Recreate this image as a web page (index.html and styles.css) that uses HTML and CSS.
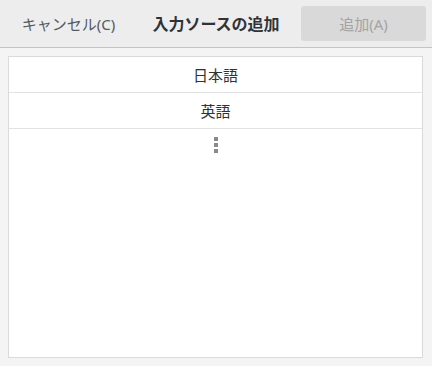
FILE: index.html
```html
<!DOCTYPE html>
<html lang="ja">
<head>
<meta charset="utf-8">
<link rel="stylesheet" href="styles.css">
</head>
<body>
<div class="dialog">
  <header class="header">
    <button class="btn btn-cancel">キャンセル(C)</button>
    <div class="title">入力ソースの追加</div>
    <button class="btn btn-add" disabled>追加(A)</button>
  </header>
  <main class="content">
    <div class="list">
      <div class="row">日本語</div>
      <div class="row">英語</div>
      <div class="row row-more">
        <span class="dots"><i></i><i></i><i></i></span>
      </div>
    </div>
  </main>
</div>
</body>
</html>
```
FILE: styles.css
```css
html, body {
  margin: 0;
  padding: 0;
  width: 432px;
  height: 366px;
  overflow: hidden;
}
body {
  font-family: "Noto Sans", "Noto Sans CJK JP", sans-serif;
  background: #f4f4f4;
  color: #2e3436;
}
.dialog {
  display: flex;
  flex-direction: column;
  height: 366px;
}
.header {
  display: flex;
  align-items: center;
  padding: 0 6px;
  box-sizing: border-box;
  background: #ededed;
  border-bottom: 1px solid #c4c4c4;
  flex: none;
  height: 48px;
}
.btn {
  width: 125px;
  height: 35px;
  border: none;
  border-radius: 3px;
  font-family: inherit;
  font-size: 15px;
  padding: 0;
  margin-top: -1px;
}
.btn-cancel {
  background: transparent;
  color: #555a5c;
}
.btn-add {
  background: #d9d9d9;
  color: #a3a3a3;
}
.title {
  flex: 1;
  text-align: center;
  font-weight: bold;
  font-size: 16px;
  color: #2e3436;
  margin-top: -1px;
}
.content {
  flex: 1;
  padding: 8px 9px 8px 8px;
  display: flex;
}
.list {
  flex: 1;
  background: #ffffff;
  border: 1px solid #dadada;
  display: flex;
  flex-direction: column;
}
.row {
  height: 35px;
  border-bottom: 1px solid #e2e2e2;
  display: flex;
  align-items: center;
  justify-content: center;
  font-size: 15px;
  color: #2e3436;
}
.row-more {
  border-bottom: none;
  align-items: flex-start;
  padding-top: 8px;
  box-sizing: border-box;
}
.dots {
  display: flex;
  flex-direction: column;
  gap: 2px;
  margin-left: 1px;
}
.dots i {
  display: block;
  width: 4px;
  height: 4px;
  background: #8a8a8a;
}
```
